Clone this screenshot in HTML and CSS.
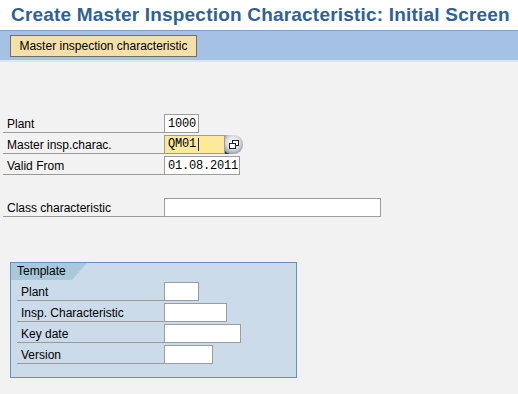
FILE: index.html
```html
<!DOCTYPE html>
<html lang="en">
<head>
    <meta charset="UTF-8">
    <title>Create Master Inspection Characteristic: Initial Screen</title>
    <link rel="stylesheet" href="styles.css">
</head>
<body>
    <!-- Screen title -->
    <div class="title">Create Master Inspection Characteristic: Initial Screen</div>

    <!-- Application toolbar -->
    <div class="toolbar">
        <button class="tb-btn">Master inspection characteristic</button>
    </div>

    <div class="screen">
        <!-- Key fields -->
        <div class="rows">
            <div class="row">
                <span class="label">Plant</span>
                <input class="field w34" value="1000">
            </div>
            <div class="row">
                <span class="label">Master insp.charac.</span>
                <div class="field w61 required">QM01<span class="caret"></span></div>
                <span class="f4-help">
                    <svg width="10" height="9" viewBox="0 0 10 9">
                        <rect x="3.5" y="0.5" width="6" height="5" fill="#fff" stroke="#222"/>
                        <rect x="0.5" y="3.5" width="6" height="5" fill="#fff" stroke="#222"/>
                    </svg>
                </span>
            </div>
            <div class="row">
                <span class="label">Valid From</span>
                <input class="field w75" value="01.08.2011">
            </div>
        </div>

        <div class="rows class-row">
            <div class="row">
                <span class="label">Class characteristic</span>
                <input class="field w216" value="">
            </div>
        </div>

        <!-- Template group box -->
        <div class="group">
            <div class="group-tab">Template</div>
            <div class="rows">
                <div class="row">
                    <span class="label">Plant</span>
                    <input class="field w34" value="">
                </div>
                <div class="row">
                    <span class="label">Insp. Characteristic</span>
                    <input class="field w62" value="">
                </div>
                <div class="row">
                    <span class="label">Key date</span>
                    <input class="field w76" value="">
                </div>
                <div class="row">
                    <span class="label">Version</span>
                    <input class="field w48" value="">
                </div>
            </div>
        </div>
    </div>
</body>
</html>
```

FILE: styles.css
```css
/* General reset */
* {
    margin: 0;
    padding: 0;
    box-sizing: border-box;
}

body {
    font-family: "Liberation Sans", Arial, sans-serif;
    font-size: 12px;
    background-color: #f2f2f2;
    color: #000;
    width: 518px;
    height: 394px;
    overflow: hidden;
}

/* Title bar */
.title {
    height: 30px;
    background-color: #fff;
    color: #2f6294;
    font-size: 19px;
    letter-spacing: 0.2px;
    font-weight: bold;
    padding: 4px 0 0 11px;
    white-space: nowrap;
}

/* Application toolbar */
.toolbar {
    height: 32px;
    background-color: #a5c1e3;
    border-top: 1px solid #7f9fc4;
    border-bottom: 2px solid #dce5ef;
    padding: 4px 0 0 10px;
}

.tb-btn {
    height: 22px;
    width: 187px;
    font-family: "Liberation Sans", Arial, sans-serif;
    font-size: 12px;
    background-color: #f4e0a8;
    border: 1px solid #6e6e6e;
    text-align: center;
    color: #000;
}

/* Screen body */
.screen {
    padding: 52px 0 0 3px;
}

.rows {
    display: flex;
    flex-direction: column;
    gap: 2px;
}

.row {
    display: flex;
    align-items: flex-end;
    height: 19px;
}

.label {
    width: 161px;
    height: 19px;
    border-bottom: 1px solid #9a9a9a;
    padding: 3px 0 0 4px;
    white-space: nowrap;
}

.field {
    height: 19px;
    border: 1px solid #9c9c9c;
    background-color: #fff;
    font-family: "Liberation Mono", "DejaVu Sans Mono", monospace;
    font-size: 12px;
    letter-spacing: -0.2px;
    line-height: 17px;
    padding: 0 0 0 3px;
    color: #000;
    outline: none;
}

.field.required {
    background-color: #fde99c;
    display: flex;
    align-items: center;
}

.caret {
    display: inline-block;
    width: 1px;
    height: 13px;
    margin-left: 2px;
    background-color: #1c2a6b;
}

.w34 { width: 35px; }
.w48 { width: 49px; }
.w61 { width: 61px; }
.w62 { width: 63px; }
.w75 { width: 76px; }
.w76 { width: 77px; }
.w216 { width: 217px; }

/* F4 value help button */
.f4-help {
    width: 18px;
    height: 19px;
    background-color: #3e3e3e;
    display: flex;
    align-items: center;
    justify-content: center;
    border-radius: 0 9px 9px 0;
    background-image: radial-gradient(circle at 45% 40%, #ffffff 0, #d9dde2 45%, #9aa2ab 75%, #3e3e3e 80%);
}

.class-row {
    margin-top: 23px;
}

/* Group box */
.group {
    margin: 45px 0 0 7px;
    width: 287px;
    height: 116px;
    border: 1px solid #6b8fba;
    background-color: #cbdbea;
}

.group-tab {
    width: 76px;
    height: 17px;
    background-color: #a9c9da;
    padding: 1px 0 0 6px;
    clip-path: polygon(0 0, 100% 0, calc(100% - 15px) 100%, 0 100%);
}

.group .rows {
    padding: 2px 0 0 6px;
}

.group .label {
    width: 147px;
}
```
